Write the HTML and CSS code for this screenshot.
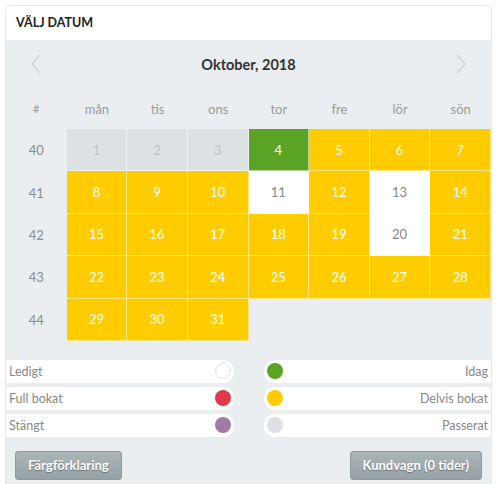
FILE: index.html
```html
<!DOCTYPE html>
<html>
<head>
    <title>Välj datum</title>
    <link rel="stylesheet" href="styles.css">
</head>
<body>
    <div class="card">
        <div class="card-header">Välj datum</div>

        <div class="card-body">
            <div class="month-nav">
                <span class="arrow">
                    <svg width="10" height="20" viewBox="0 0 10 20"><path d="M9 1 L1 10 L9 19" fill="none" stroke="#cfd3d5" stroke-width="1.3"/></svg>
                </span>
                <span class="month-title">Oktober, 2018</span>
                <span class="arrow">
                    <svg width="10" height="20" viewBox="0 0 10 20"><path d="M1 1 L9 10 L1 19" fill="none" stroke="#cfd3d5" stroke-width="1.3"/></svg>
                </span>
            </div>

            <table class="calendar">
                <thead>
                    <tr>
                        <th class="week">#</th>
                        <th>mån</th>
                        <th>tis</th>
                        <th>ons</th>
                        <th>tor</th>
                        <th>fre</th>
                        <th>lör</th>
                        <th>sön</th>
                    </tr>
                </thead>
                <tbody>
                    <tr>
                        <td class="week">40</td>
                        <td class="day passed">1</td>
                        <td class="day passed">2</td>
                        <td class="day passed">3</td>
                        <td class="day today">4</td>
                        <td class="day partial">5</td>
                        <td class="day partial">6</td>
                        <td class="day partial">7</td>
                    </tr>
                    <tr>
                        <td class="week">41</td>
                        <td class="day partial">8</td>
                        <td class="day partial">9</td>
                        <td class="day partial">10</td>
                        <td class="day free">11</td>
                        <td class="day partial">12</td>
                        <td class="day free">13</td>
                        <td class="day partial">14</td>
                    </tr>
                    <tr>
                        <td class="week">42</td>
                        <td class="day partial">15</td>
                        <td class="day partial">16</td>
                        <td class="day partial">17</td>
                        <td class="day partial">18</td>
                        <td class="day partial">19</td>
                        <td class="day free">20</td>
                        <td class="day partial">21</td>
                    </tr>
                    <tr>
                        <td class="week">43</td>
                        <td class="day partial">22</td>
                        <td class="day partial">23</td>
                        <td class="day partial">24</td>
                        <td class="day partial">25</td>
                        <td class="day partial">26</td>
                        <td class="day partial">27</td>
                        <td class="day partial">28</td>
                    </tr>
                    <tr>
                        <td class="week">44</td>
                        <td class="day partial">29</td>
                        <td class="day partial">30</td>
                        <td class="day partial">31</td>
                        <td></td>
                        <td></td>
                        <td></td>
                        <td></td>
                    </tr>
                </tbody>
            </table>

            <div class="legend">
                <div class="legend-col left">
                    <div class="legend-item"><span>Ledigt</span><i class="dot free"></i></div>
                    <div class="legend-item"><span>Full bokat</span><i class="dot full"></i></div>
                    <div class="legend-item"><span>Stängt</span><i class="dot closed"></i></div>
                </div>
                <div class="legend-col right">
                    <div class="legend-item"><i class="dot today"></i><span>Idag</span></div>
                    <div class="legend-item"><i class="dot partial"></i><span>Delvis bokat</span></div>
                    <div class="legend-item"><i class="dot passed"></i><span>Passerat</span></div>
                </div>
            </div>

            <div class="actions">
                <button class="btn">Färgförklaring</button>
                <button class="btn">Kundvagn (0 tider)</button>
            </div>
        </div>
    </div>
</body>
</html>
```

FILE: styles.css
```css
body {
    margin: 0;
    padding: 5px 8px 0 5px;
    background-color: #fff;
    font-family: Lato, "Liberation Sans", sans-serif;
    color: #888;
}

.card {
    border: 1px solid #e6e6e6;
    border-bottom: none;
    border-radius: 6px 6px 0 0;
    overflow: hidden;
}

.card-header {
    height: 34px;
    line-height: 34px;
    padding-left: 10px;
    background-color: #fff;
    color: #222;
    font-weight: bold;
    font-size: 12.5px;
    text-transform: uppercase;
}

.card-body {
    background-color: #eaeef0;
    padding-bottom: 10px;
}

.month-nav {
    height: 48px;
    display: flex;
    align-items: center;
    justify-content: space-between;
    padding: 0 25px;
}

.arrow {
    display: flex;
    width: 10px;
}

.month-title {
    color: #333;
    font-weight: bold;
    font-size: 14.5px;
}

.calendar {
    width: 100%;
    border-spacing: 0;
    table-layout: fixed;
    font-size: 13px;
}

.calendar th {
    height: 41px;
    font-weight: normal;
    color: #9a9a9a;
    padding: 0;
}

.calendar th.week {
    font-size: 11px;
}

.calendar td {
    height: 42.4px;
    padding: 0;
    text-align: center;
    box-sizing: border-box;
}

.calendar td.week {
    color: #8c8c8c;
}

.day {
    border-right: 1px solid rgba(255, 255, 255, 0.55);
    border-bottom: 1px solid rgba(255, 255, 255, 0.55);
}

.day.passed {
    background-color: #dce2e4;
    color: #bcc2c4;
}

.day.today {
    background-color: #5aa325;
    color: #fff;
}

.day.partial {
    background-color: #ffcc00;
    color: #fff;
}

.day.free {
    background-color: #fff;
    color: #888;
}

.legend {
    display: flex;
    margin-top: 19px;
    font-size: 12.5px;
}

.legend-col {
    flex: 1;
    display: flex;
    flex-direction: column;
    gap: 4px;
}

.legend-col.left {
    padding-right: 15px;
}

.legend-col.right {
    padding-left: 15px;
}

.legend-item {
    height: 23px;
    background-color: #fff;
    display: flex;
    align-items: center;
    justify-content: space-between;
}

.left .legend-item {
    border-radius: 0 12px 12px 0;
    padding: 0 3px 0 3px;
}

.right .legend-item {
    border-radius: 12px 0 0 12px;
    padding: 0 3px 0 3px;
}

.dot {
    width: 16px;
    height: 16px;
    border-radius: 50%;
    box-sizing: border-box;
}

.dot.free {
    border: 1px solid #e2e2e2;
    background-color: #fff;
}

.dot.full {
    background-color: #e0394a;
}

.dot.closed {
    background-color: #a17aa5;
}

.dot.today {
    background-color: #5aa325;
}

.dot.partial {
    background-color: #ffcc00;
}

.dot.passed {
    background-color: #dce2e4;
}

.actions {
    display: flex;
    justify-content: space-between;
    margin-top: 14px;
    padding: 0 9px;
}

.btn {
    height: 29px;
    padding: 0 12px;
    border: 1px solid #8e9a9d;
    border-radius: 3px;
    background: linear-gradient(#aab5b8, #96a2a5);
    color: #fff;
    font-family: Lato, "Liberation Sans", sans-serif;
    font-weight: bold;
    font-size: 13px;
    text-shadow: 0 1px 1px rgba(0, 0, 0, 0.35);
    cursor: pointer;
}
```
